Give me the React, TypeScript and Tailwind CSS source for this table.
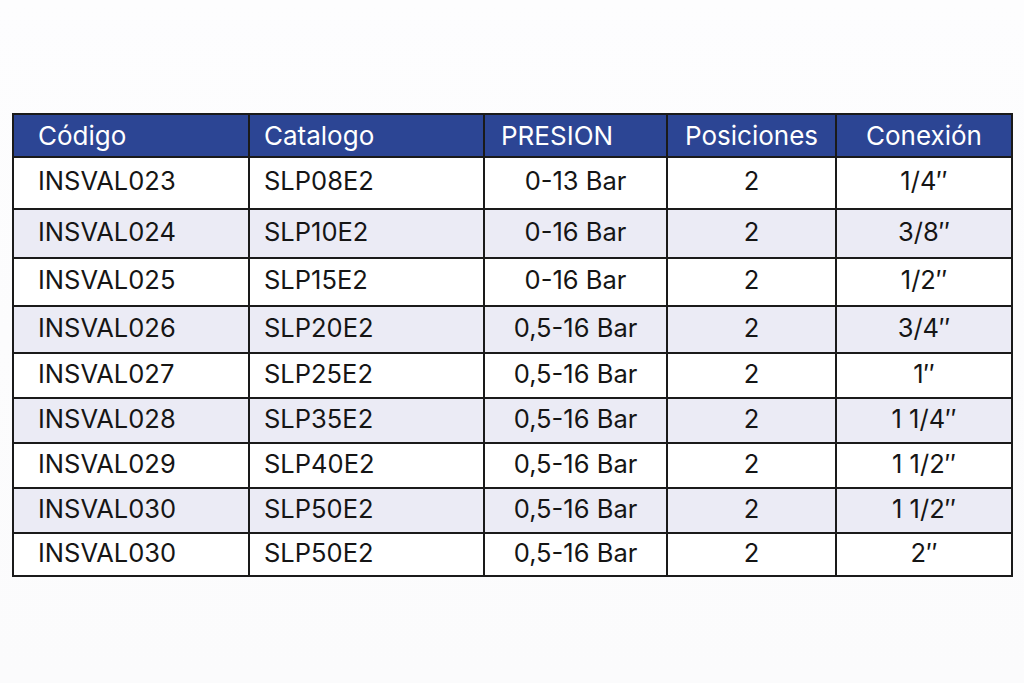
import React from "react";

const rows = [
  ["INSVAL023", "SLP08E2", "0-13 Bar", "2", "1/4\u2033", 52],
  ["INSVAL024", "SLP10E2", "0-16 Bar", "2", "3/8\u2033", 49],
  ["INSVAL025", "SLP15E2", "0-16 Bar", "2", "1/2\u2033", 48],
  ["INSVAL026", "SLP20E2", "0,5-16 Bar", "2", "3/4\u2033", 47],
  ["INSVAL027", "SLP25E2", "0,5-16 Bar", "2", "1\u2033", 45],
  ["INSVAL028", "SLP35E2", "0,5-16 Bar", "2", "1 1/4\u2033", 45],
  ["INSVAL029", "SLP40E2", "0,5-16 Bar", "2", "1 1/2\u2033", 45],
  ["INSVAL030", "SLP50E2", "0,5-16 Bar", "2", "1 1/2\u2033", 45],
  ["INSVAL030", "SLP50E2", "0,5-16 Bar", "2", "2\u2033", 43],
] as const;

export default function App() {
  return (
    <div
      className="w-[1024px] h-[683px] bg-gradient-to-b from-[#fdfdfe] to-[#fbfbfc] pt-[113px] pl-[12px]"
      style={{ fontFamily: "Inter, 'Open Sans', sans-serif" }}
    >
      <table className="border-collapse border-2 border-[#1a1a1a] w-[999px] table-fixed">
        <colgroup>
          <col className="w-[236px]" />
          <col className="w-[235px]" />
          <col className="w-[183px]" />
          <col className="w-[169px]" />
          <col className="w-[176px]" />
        </colgroup>
        <thead>
          <tr className="h-[43px] bg-[#2c4594] text-white text-[26px] leading-none">
            <th className="border-2 border-[#1a1a1a] text-left font-normal pl-[24px]">Código</th>
            <th className="border-2 border-[#1a1a1a] text-left font-normal pl-[14px]">Catalogo</th>
            <th className="border-2 border-[#1a1a1a] text-left font-normal pl-[16px]">PRESION</th>
            <th className="border-2 border-[#1a1a1a] text-center font-normal">Posiciones</th>
            <th className="border-2 border-[#1a1a1a] text-center font-normal">Conexión</th>
          </tr>
        </thead>
        <tbody className="text-[25.5px] leading-none text-[#151515]">
          {rows.map((r, i) => (
            <tr
              key={i}
              className={i % 2 === 1 ? "bg-[#ebebf5]" : "bg-white"}
              style={{ height: r[5] }}
            >
              <td className="border-2 border-[#1a1a1a] pl-[24px] pb-[4px]">{r[0]}</td>
              <td className="border-2 border-[#1a1a1a] pl-[14px] pb-[4px]">{r[1]}</td>
              <td className="border-2 border-[#1a1a1a] text-center pb-[4px]">{r[2]}</td>
              <td className="border-2 border-[#1a1a1a] text-center pb-[4px]">{r[3]}</td>
              <td className="border-2 border-[#1a1a1a] text-center pb-[4px]">{r[4]}</td>
            </tr>
          ))}
        </tbody>
      </table>
    </div>
  );
}
